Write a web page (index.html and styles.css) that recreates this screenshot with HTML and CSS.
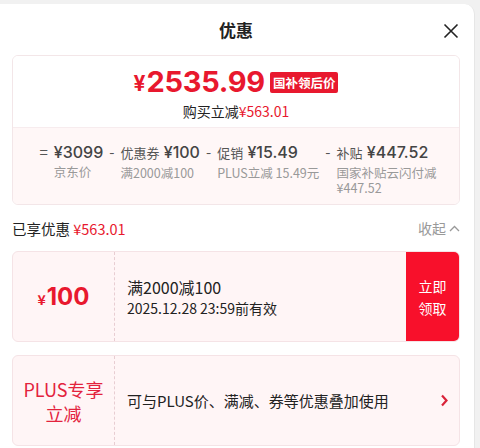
FILE: index.html
```html
<!DOCTYPE html>
<html lang="zh-CN">
<head>
    <meta charset="UTF-8">
    <title>优惠</title>
    <link rel="stylesheet" href="styles.css">
</head>
<body>
    <div class="panel">
        <div class="header">
            <span class="title">优惠</span>
            <span class="close">
                <svg width="16" height="16" viewBox="0 0 16 16"><path d="M1.5 1.5 L14.5 14.5 M14.5 1.5 L1.5 14.5" stroke="#222" stroke-width="1.6" fill="none"/></svg>
            </span>
        </div>

        <div class="summary">
            <div class="summary-top">
                <div class="final-price">
                    <span class="yen">¥</span><span class="num">2535.99</span>
                    <span class="badge">国补领后价</span>
                </div>
                <div class="cut">购买立减<span class="red">¥563.01</span></div>
            </div>
            <div class="summary-bottom">
                <div class="calc">
                    <div class="col">
                        <span class="op">=</span>
                        <div class="col-body">
                            <div class="val">¥3099</div>
                            <div class="lbl">京东价</div>
                        </div>
                    </div>
                    <div class="col">
                        <span class="op">-</span>
                        <div class="col-body">
                            <div class="val"><small>优惠券</small> ¥100</div>
                            <div class="lbl">满2000减100</div>
                        </div>
                    </div>
                    <div class="col">
                        <span class="op">-</span>
                        <div class="col-body">
                            <div class="val"><small>促销</small> ¥15.49</div>
                            <div class="lbl">PLUS立减 15.49元</div>
                        </div>
                    </div>
                    <div class="col">
                        <span class="op">-</span>
                        <div class="col-body narrow">
                            <div class="val"><small>补贴</small> ¥447.52</div>
                            <div class="lbl">国家补贴云闪付减 ¥447.52</div>
                        </div>
                    </div>
                </div>
            </div>
        </div>

        <div class="enjoyed">
            <div class="enjoyed-left">已享优惠 <span class="red">¥563.01</span></div>
            <div class="fold">收起
                <svg width="11" height="7" viewBox="0 0 11 7"><path d="M1 6 L5.5 1.5 L10 6" stroke="#999" stroke-width="1.3" fill="none"/></svg>
            </div>
        </div>

        <div class="coupon">
            <div class="coupon-left"><span class="c-yen">¥</span><span class="c-num">100</span></div>
            <div class="coupon-mid">
                <div class="c-title">满2000减100</div>
                <div class="c-date">2025.12.28 23:59前有效</div>
            </div>
            <div class="coupon-btn">立即<br>领取</div>
        </div>

        <div class="coupon">
            <div class="coupon-left plus">PLUS专享<br>立减</div>
            <div class="coupon-mid">
                <div class="c-desc">可与PLUS价、满减、券等优惠叠加使用</div>
            </div>
            <div class="coupon-arrow">
                <svg width="9" height="13" viewBox="0 0 9 13"><path d="M2 1.5 L6.5 6.5 L2 11.5" stroke="#d9233a" stroke-width="2.2" fill="none"/></svg>
            </div>
        </div>
    </div>
</body>
</html>
```

FILE: styles.css
```css
body {
    margin: 0;
    font-family: "Noto Sans CJK SC", "Noto Sans", sans-serif;
    background-color: #f1f1f1;
    color: #222;
}
.panel {
    width: 475px;
    height: 444px;
    margin-top: 4px;
    background: #fff;
    border-right: 1px solid #e6e6e6;
    border-top-right-radius: 10px;
    box-sizing: border-box;
    padding: 0 14px 0 12px;
    overflow: hidden;
}
.header {
    height: 51px;
    display: flex;
    align-items: center;
    justify-content: center;
    position: relative;
}
.title {
    font-size: 17px;
    font-weight: bold;
    color: #222;
}
.close {
    position: absolute;
    right: 1px;
    top: 19px;
    line-height: 0;
}
.summary {
    border: 1px solid #f3e6e8;
    border-radius: 6px;
    overflow: hidden;
}
.summary-top {
    background: #fff;
    height: 71px;
    text-align: center;
    padding-top: 7px;
    box-sizing: border-box;
}
.final-price {
    display: flex;
    align-items: center;
    justify-content: center;
    height: 36px;
    color: #e8182e;
    font-family: "Inter", "Noto Sans", sans-serif;
    font-weight: bold;
}
.yen {
    font-size: 21px;
    margin-top: 4px;
    margin-right: 1px;
}
.num {
    font-size: 29px;
    letter-spacing: -0.3px;
}
.badge {
    background: #e8182e;
    color: #fff;
    font-size: 12.5px;
    font-family: "Noto Sans CJK SC", sans-serif;
    padding: 0 3px;
    height: 21px;
    line-height: 21px;
    border-radius: 2px;
    margin-left: 5px;
    margin-top: 3px;
}
.cut {
    font-size: 14px;
    color: #222;
    margin-top: 2px;
}
.red {
    color: #e8182e;
}
.summary-bottom {
    background: #fff7f7;
    border-top: 1px solid #f7ecee;
    height: 77px;
    padding-top: 13px;
    box-sizing: border-box;
}
.calc {
    display: flex;
    justify-content: center;
    gap: 6px;
    padding-left: 4px;
}
.col {
    display: flex;
    gap: 6px;
}
.op {
    font-size: 15px;
    color: #555;
    line-height: 22px;
}
.val {
    font-size: 16px;
    color: #444;
    line-height: 22px;
    font-family: "Inter", "Noto Sans CJK SC", sans-serif;
    font-weight: 500;
    white-space: nowrap;
}
.val small {
    font-size: 13px;
    font-family: "Noto Sans CJK SC", sans-serif;
    font-weight: normal;
    color: #555;
}
.lbl {
    font-size: 12.5px;
    color: #999;
    line-height: 15px;
    margin-top: 1px;
}
.narrow {
    width: 100px;
}
.enjoyed {
    display: flex;
    justify-content: space-between;
    align-items: center;
    height: 46px;
}
.enjoyed-left {
    font-size: 14.5px;
    color: #222;
}
.fold {
    font-size: 14px;
    color: #999;
    display: flex;
    align-items: center;
    gap: 3px;
}
.coupon {
    display: flex;
    height: 91px;
    background: #fff5f6;
    border: 1px solid #f5e3e6;
    border-radius: 6px;
    box-sizing: border-box;
    margin-bottom: 13px;
    overflow: hidden;
}
.coupon-left {
    width: 101px;
    border-right: 1px dashed #e8cdd2;
    display: flex;
    align-items: center;
    justify-content: center;
    color: #e8182e;
    font-weight: bold;
}
.c-yen {
    font-size: 14px;
    margin-top: 5px;
    margin-right: 1px;
}
.c-num {
    font-size: 24px;
    font-family: "Inter", "Noto Sans", sans-serif;
}
.coupon-left.plus {
    font-weight: normal;
    font-size: 18px;
    line-height: 24px;
    text-align: center;
    color: #e3233d;
}
.coupon-mid {
    flex: 1;
    display: flex;
    flex-direction: column;
    justify-content: center;
    padding-left: 12px;
}
.c-title {
    font-size: 16px;
    line-height: 22px;
}
.c-date {
    font-size: 14px;
    line-height: 20px;
}
.c-desc {
    font-size: 15px;
}
.coupon-btn {
    width: 53px;
    background: #f8102b;
    color: #fff;
    font-size: 14px;
    line-height: 22px;
    display: flex;
    align-items: center;
    justify-content: center;
    text-align: center;
}
.coupon-arrow {
    width: 30px;
    display: flex;
    align-items: center;
    justify-content: center;
}
```
